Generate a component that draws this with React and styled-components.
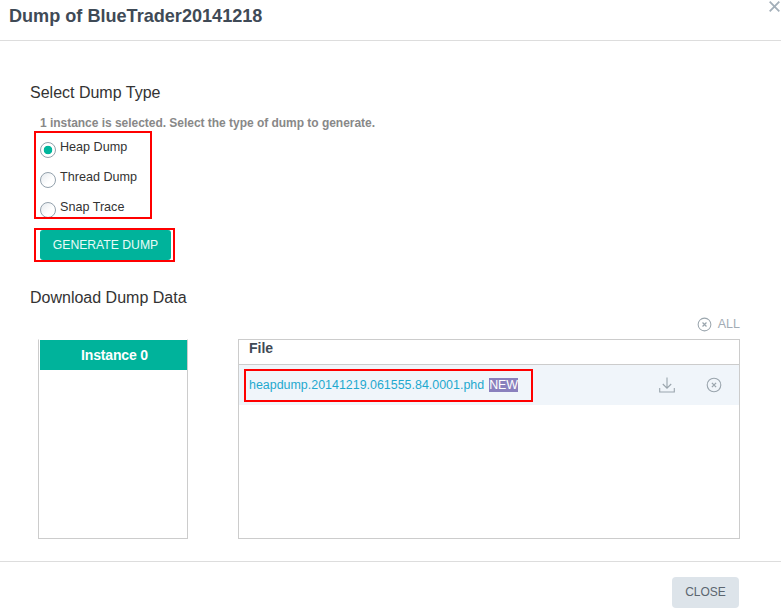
import React from "react";
import styled, { createGlobalStyle } from "styled-components";

const GlobalStyle = createGlobalStyle`
  html, body {
    margin: 0;
    padding: 0;
    background: #fff;
    overflow: hidden;
  }
  body {
    font-family: "Liberation Sans", Arial, sans-serif;
    color: #333;
  }
`;

const RADIOS = [
  { label: "Heap Dump", checked: true },
  { label: "Thread Dump", checked: false },
  { label: "Snap Trace", checked: false }
];

const CircleX = ({ size = 16 }) => (
  <svg width={size} height={size} viewBox="0 0 16 16" fill="none" stroke="#9aa5ad">
    <circle cx="8" cy="8" r="6.8" strokeWidth="1.1" />
    <path d="M5.9 5.9l4.2 4.2M10.1 5.9l-4.2 4.2" strokeWidth="1.3" />
  </svg>
);

const DownloadIcon = () => (
  <svg width="16" height="16" viewBox="0 0 16 16" fill="none" stroke="#9aa5ad" strokeWidth="1.1">
    <path d="M8 .5v10.5M3.8 7l4.2 4.2L12.2 7M.7 11v4h14.6v-4" />
  </svg>
);

const App = () => (
  <>
    <GlobalStyle />
    <Modal>
      <Header>
        <Title>Dump of BlueTrader20141218</Title>
        <CloseX>
          <svg width="11" height="11" viewBox="0 0 11 11" fill="none" stroke="#a3afb9" strokeWidth="1.8">
            <path d="M.7.7l9.6 9.6M10.3.7L.7 10.3" />
          </svg>
        </CloseX>
      </Header>

      <Body>
        <SectionTitle>Select Dump Type</SectionTitle>
        <Hint>1 instance is selected. Select the type of dump to generate.</Hint>

        <RadioMarkup>
          {RADIOS.map(radio => (
            <RadioRow key={radio.label}>
              <Radio checked={radio.checked} />
              <RadioLabel>{radio.label}</RadioLabel>
            </RadioRow>
          ))}
        </RadioMarkup>

        <ButtonMarkup>
          <GenerateButton>GENERATE DUMP</GenerateButton>
        </ButtonMarkup>

        <DownloadTitle>Download Dump Data</DownloadTitle>

        <ClearAll>
          <CircleX size={15} />
          <span>ALL</span>
        </ClearAll>

        <Panels>
          <InstancePanel>
            <InstanceHeader>Instance 0</InstanceHeader>
          </InstancePanel>

          <FilePanel>
            <FileHeader>File</FileHeader>
            <FileRow>
              <FileMarkup>
                <FileLink>heapdump.20141219.061555.84.0001.phd</FileLink>
                <NewBadge>NEW</NewBadge>
              </FileMarkup>
              <RowActions>
                <DownloadIcon />
                <CircleX />
              </RowActions>
            </FileRow>
          </FilePanel>
        </Panels>
      </Body>

      <Footer>
        <CloseButton>CLOSE</CloseButton>
      </Footer>
    </Modal>
  </>
);

// MAIN CONTAINER

const Modal = styled.div`
  width: 781px;
  height: 611px;
  background: #fff;
  display: flex;
  flex-direction: column;
`;

// HEADER

const Header = styled.div`
  position: relative;
  height: 40px;
  flex: none;
  box-sizing: content-box;
  border-bottom: 1px solid #ddd;
  padding-left: 9px;
`;

const Title = styled.div`
  font-size: 18.1px;
  font-weight: bold;
  line-height: 33px;
  color: #3f4a56;
`;

const CloseX = styled.div`
  position: absolute;
  top: 1px;
  right: 1px;
  line-height: 0;
`;

// BODY

const Body = styled.div`
  flex: 1;
  padding: 41px 41px 0 30px;
  display: flex;
  flex-direction: column;
  align-items: flex-start;
`;

const SectionTitle = styled.div`
  font-size: 16px;
  line-height: 21px;
  color: #333;
`;

const Hint = styled.div`
  margin: 13px 0 0 10px;
  font-size: 12px;
  font-weight: bold;
  line-height: 14px;
  letter-spacing: -0.03px;
  color: #888;
`;

const RadioMarkup = styled.div`
  margin: 1px 0 0 4px;
  box-sizing: border-box;
  width: 118px;
  height: 88px;
  border: 2px solid #f00;
  display: flex;
  flex-direction: column;
  gap: 10px;
  padding: 0 0 0 4px;
  overflow: hidden;
`;

const RadioRow = styled.div`
  display: flex;
  align-items: flex-start;
  gap: 4px;
  height: 20px;
`;

const Radio = styled.span`
  flex: none;
  box-sizing: border-box;
  width: 16px;
  height: 16px;
  margin-top: 9px;
  border-radius: 50%;
  border: 1px solid #93a1ac;
  background: ${props =>
    props.checked
      ? "radial-gradient(circle, #00b59c 0 4px, #fff 4.6px)"
      : "linear-gradient(135deg, #e6eaee, #fff 60%)"};
`;

const RadioLabel = styled.span`
  font-size: 12.6px;
  line-height: 16px;
  margin-top: 6px;
  color: #333;
`;

const ButtonMarkup = styled.div`
  margin: 9px 0 0 4px;
  box-sizing: border-box;
  width: 141px;
  height: 34px;
  border: 2px solid #f00;
  padding: 0 2px 0 4px;
`;

const GenerateButton = styled.button`
  display: block;
  width: 131px;
  height: 30px;
  margin: 0;
  border: 0;
  border-radius: 3px;
  padding: 0;
  background: #00b39b;
  color: #e8fbf7;
  font-family: inherit;
  font-size: 12.2px;
`;

const DownloadTitle = styled.div`
  margin-top: 26px;
  font-size: 16px;
  line-height: 20px;
  color: #333;
`;

const ClearAll = styled.div`
  align-self: flex-end;
  margin-top: 8px;
  display: flex;
  align-items: center;
  gap: 6px;
  height: 16px;
  font-size: 12.5px;
  color: #a3acb4;
`;

// PANELS

const Panels = styled.div`
  margin: 7px 0 0 8px;
  display: flex;
  gap: 50px;
  width: 702px;
  height: 200px;
`;

const InstancePanel = styled.div`
  box-sizing: border-box;
  width: 150px;
  border: 1px solid #ccc;
  border-top-color: #fff;
  padding: 0 0 0 1px;
`;

const InstanceHeader = styled.div`
  height: 30px;
  padding-left: 2px;
  background: #00b39b;
  color: #fff;
  font-size: 14px;
  font-weight: bold;
  letter-spacing: -0.15px;
  line-height: 30px;
  text-align: center;
`;

const FilePanel = styled.div`
  box-sizing: border-box;
  flex: 1;
  border: 1px solid #ccc;
`;

const FileHeader = styled.div`
  height: 24px;
  box-sizing: content-box;
  border-bottom: 1px solid #ccc;
  padding-left: 10px;
  font-size: 14px;
  font-weight: bold;
  line-height: 17px;
  color: #3f4a56;
`;

const FileRow = styled.div`
  height: 40px;
  background: #f0f5fa;
  display: flex;
  align-items: center;
  justify-content: space-between;
  padding: 0 17px 0 5px;
`;

const FileMarkup = styled.div`
  box-sizing: border-box;
  width: 289px;
  height: 33px;
  margin-top: 1px;
  border: 2px solid #f00;
  padding: 0 0 2px 3px;
  display: flex;
  align-items: center;
  gap: 5px;
`;

const FileLink = styled.span`
  font-size: 12.45px;
  color: #1fa9cf;
`;

const NewBadge = styled.span`
  background: #8a80bd;
  color: #fff;
  font-size: 12.4px;
  line-height: 14px;
`;

const RowActions = styled.div`
  display: flex;
  align-items: center;
  gap: 31px;
  line-height: 0;
`;

// FOOTER

const Footer = styled.div`
  flex: none;
  box-sizing: border-box;
  height: 50px;
  border-top: 1px solid #ddd;
  display: flex;
  justify-content: flex-end;
  padding: 15px 42px 0 0;
`;

const CloseButton = styled.button`
  width: 67px;
  height: 31px;
  margin: 0;
  border: 0;
  border-radius: 4px;
  padding: 0 0 2px;
  background: #dde4ea;
  color: #5b6670;
  font-family: inherit;
  font-size: 12px;
`;

export default App;
